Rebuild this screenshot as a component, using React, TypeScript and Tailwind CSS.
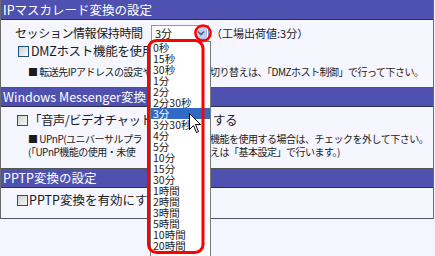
import React from "react";

const TIMES = [
  "0秒", "15秒", "30秒", "1分", "2分", "2分30秒", "3分", "3分30秒", "4分", "5分",
  "10分", "15分", "30分", "1時間", "2時間", "3時間", "5時間", "10時間", "20時間",
];

function Checkbox() {
  return (
    <span className="w-[11px] h-[11px] shrink-0 border border-[#1c5180] bg-linear-to-br from-[#cfcfca] to-[#fbfbfb]" />
  );
}

function Header({ title, tall }: { title: string; tall?: boolean }) {
  return (
    <div
      className={
        (tall ? "h-[20px] leading-[19px] " : "h-[19px] leading-[18px] ") +
        "bg-[#4f51b0] border-b border-[#2c2c55] text-white text-[12.5px] pl-[2px] whitespace-nowrap overflow-hidden"
      }
    >
      {title}
    </div>
  );
}

// line whose middle is hidden by the open list; the right part starts at x 210
function SplitLine({ left, right, width }: { left: string; right: string; width: string }) {
  return (
    <div className="flex whitespace-nowrap">
      <span className={width + " shrink-0"}>{left}</span>
      <span>{right}</span>
    </div>
  );
}

export default function App() {
  return (
    <div className="relative w-[435px] h-[256px] overflow-hidden bg-[#f5f5ff] text-[#1a1a1a] font-['Noto_Sans_CJK_JP',sans-serif]">
      <div className="w-[434px] border-x border-[#6a6a6a]">
        {/* IP masquerade */}
        <div className="border-b border-[#555]">
          <Header title="IPマスカレード変換の設定" tall />
          <div className="h-[67px] bg-[#f5f6ff] pl-[14px] pt-[5px] flex flex-col">
            <div className="flex items-center h-[16px]">
              <span className="w-[136px] text-[12px] tracking-[-0.4px] leading-[16px] whitespace-nowrap">セッション情報保持時間</span>
              <div className="w-[58px] h-[16px] bg-white border border-[#7f9db9] flex items-center justify-between pl-[3px] pr-[1px]">
                <span className="text-[11px] leading-none">3分</span>
                <span className="w-[12px] h-[12px] rounded-[3px] bg-[#bcd0f7] border border-[#a5bbe8] flex items-center justify-center">
                  <svg width="8" height="6" viewBox="0 0 8 6">
                    <path d="M1 1.5 L4 4.5 L7 1.5" fill="none" stroke="#4d6185" strokeWidth="1.6" />
                  </svg>
                </span>
              </div>
              <span className="ml-[2px] text-[11px] whitespace-nowrap">（工場出荷値:3分）</span>
            </div>
            <div className="flex items-center gap-[2px] h-[14px] mt-[3px] pl-[3px] text-[12.5px] tracking-[-0.3px] whitespace-nowrap">
              <Checkbox />
              <span>DMZホスト機能を使用</span>
            </div>
            <div className="mt-[8px] pl-[13px] text-[10px] tracking-[-0.5px] leading-[12px]">
              <SplitLine
                width="w-[182px]"
                left="■ 転送先IPアドレスの設定や"
                right="切り替えは、「DMZホスト制御」で行って下さい。"
              />
            </div>
          </div>
        </div>

        {/* Windows Messenger */}
        <div className="border-b border-[#555]">
          <Header title="Windows Messenger変換" />
          <div className="h-[61px] bg-[#f5f6ff] pl-[16px] pt-[6px] flex flex-col">
            <div className="flex items-center gap-[1px] h-[14px] text-[12.5px] tracking-[-0.6px] whitespace-nowrap">
              <Checkbox />
              <SplitLine width="w-[184px]" left="「音声/ビデオチャット」" right="する" />
            </div>
            <div className="mt-[5px] pl-[11px] text-[10px] tracking-[-0.5px] leading-[13px]">
              <SplitLine
                width="w-[182px]"
                left="■ UPnP(ユニバーサルプラ"
                right="機能を使用する場合は、チェックを外して下さい。"
              />
              <SplitLine
                width="w-[182px]"
                left="(「UPnP機能の使用・未使"
                right="えは「基本設定」で行います。)"
              />
            </div>
          </div>
        </div>

        {/* PPTP */}
        <div className="border-b border-[#555]">
          <Header title="PPTP変換の設定" />
          <div className="h-[30px] bg-[#f5f6ff] pl-[16px] pt-[5px]">
            <div className="flex items-center gap-[1px] h-[14px] text-[12.5px] whitespace-nowrap">
              <Checkbox />
              <span>PPTP変換を有効にす</span>
            </div>
          </div>
        </div>
      </div>

      {/* open select list */}
      <div className="absolute left-[150px] top-[41px] w-[61px] h-[230px] bg-white border border-[#7a7a7a]">
        {TIMES.map((t) => (
          <div
            key={t}
            className={
              "h-[11px] leading-[11px] text-[10.5px] pl-[2px] whitespace-nowrap " +
              (t === "3分" ? "bg-[#316ac5] text-white" : "text-[#222]")
            }
          >
            {t}
          </div>
        ))}
      </div>

      {/* red annotation + mouse pointer */}
      <svg className="absolute inset-0 pointer-events-none" width="435" height="256" viewBox="0 0 435 256">
        <rect x="148.5" y="40.5" width="54.5" height="212" rx="8" fill="none" stroke="#ff0000" strokeWidth="3" />
        <circle cx="203" cy="33" r="7.6" fill="none" stroke="#ff0000" strokeWidth="2.5" />
        <path
          d="M189.5 113.5 L189.5 129.5 L193.5 125.5 L196.5 132.5 L198.5 131.5 L195.5 124.5 L200.5 124.5 Z"
          fill="#fff"
          stroke="#000"
          strokeWidth="1"
        />
      </svg>
    </div>
  );
}
